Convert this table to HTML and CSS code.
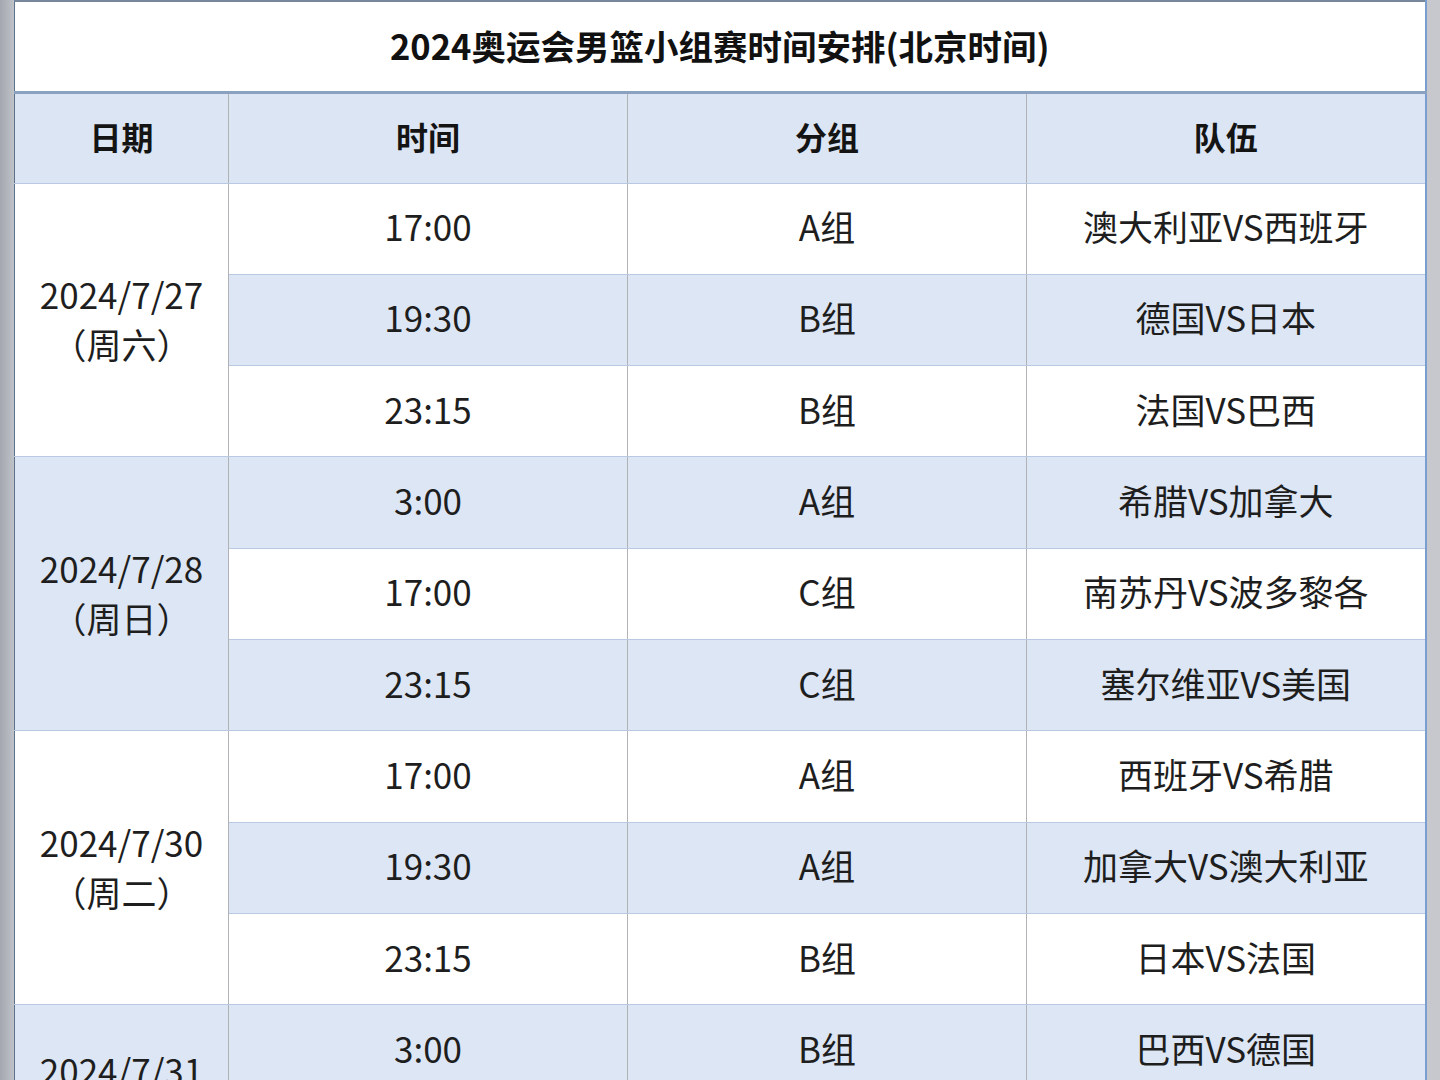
FILE: index.html
```html
<!DOCTYPE html>
<html lang="zh-CN">
<head>
<meta charset="utf-8">
<title>2024奥运会男篮小组赛时间安排(北京时间)</title>
<link rel="stylesheet" href="styles.css">
</head>
<body>
<div class="page">
<table class="schedule">
  <colgroup>
    <col class="c-date">
    <col class="c-time">
    <col class="c-group">
    <col class="c-team">
  </colgroup>
  <tr class="title-row"><td colspan="4" class="title">2024奥运会男篮小组赛时间安排(北京时间)</td></tr>
  <tr class="head-row"><th class="first">日期</th><th>时间</th><th>分组</th><th class="last">队伍</th></tr>

  <tr class="row w"><td class="date first w" rowspan="3">2024/7/27<br>（周六）</td><td>17:00</td><td>A组</td><td class="last">澳大利亚VS西班牙</td></tr>
  <tr class="row b"><td>19:30</td><td>B组</td><td class="last">德国VS日本</td></tr>
  <tr class="row w"><td>23:15</td><td>B组</td><td class="last">法国VS巴西</td></tr>

  <tr class="row b"><td class="date first b" rowspan="3">2024/7/28<br>（周日）</td><td>3:00</td><td>A组</td><td class="last">希腊VS加拿大</td></tr>
  <tr class="row w"><td>17:00</td><td>C组</td><td class="last">南苏丹VS波多黎各</td></tr>
  <tr class="row b"><td>23:15</td><td>C组</td><td class="last">塞尔维亚VS美国</td></tr>

  <tr class="row w"><td class="date first w" rowspan="3">2024/7/30<br>（周二）</td><td>17:00</td><td>A组</td><td class="last">西班牙VS希腊</td></tr>
  <tr class="row b"><td>19:30</td><td>A组</td><td class="last">加拿大VS澳大利亚</td></tr>
  <tr class="row w"><td>23:15</td><td>B组</td><td class="last">日本VS法国</td></tr>

  <tr class="row b"><td class="date first b" rowspan="2">2024/7/31<br>（周三）</td><td>3:00</td><td>B组</td><td class="last">巴西VS德国</td></tr>
  <tr class="row w"><td>23:15</td><td>C组</td><td class="last">南苏丹VS塞尔维亚</td></tr>
</table>
</div>
</body>
</html>
```
FILE: styles.css
```css
html, body {
  margin: 0;
  padding: 0;
}
body {
  background: linear-gradient(to right, #a3a7af 0, #bfc2c8 14px, #c6c8cd 100%);
  font-family: "Noto Sans CJK SC", "Noto Sans", sans-serif;
  color: #1e1e1e;
  height: 1080px;
  overflow: hidden;
}
.page {
  padding-left: 14px;
}
.schedule {
  border-collapse: collapse;
  table-layout: fixed;
  width: 1411px;
  background: #ffffff;
}
.c-date { width: 214px; }
.c-time { width: 399px; }
.c-group { width: 399px; }
.c-team { width: 399px; }

.schedule td, .schedule th {
  padding: 0;
  text-align: center;
  vertical-align: middle;
  border-top: 1px solid #b9c9e1;
  border-bottom: 1px solid #b9c9e1;
  border-left: 1px solid #b0b2b6;
  border-right: 1px solid #b0b2b6;
}
.schedule .first { border-left: 1px solid #5d7188; }
.schedule .last { border-right: 2px solid #7b9ed0; }

.title-row { height: 91px; }
.schedule .title {
  background: #ffffff;
  font-size: 34.5px;
  font-weight: 700;
  color: #111;
  border-top: 2px solid #76879b;
  border-left: 1px solid #5d7188;
  border-right: 2px solid #7b9ed0;
  border-bottom: 3px solid #8aa1bf;
  padding-bottom: 2px;
}
.head-row { height: 91px; }
.schedule th {
  background: #dce5f3;
  font-size: 32px;
  font-weight: 700;
  color: #141414;
  padding-bottom: 4px;
}
.row { height: 91.3px; }
.row td {
  font-size: 35px;
  font-weight: 400;
  line-height: 1.2;
  padding-bottom: 5px;
}
.row.w td { background: #ffffff; }
.row.b td { background: #dde6f4; }
.row td.date.w { background: #ffffff; }
.row td.date.b { background: #dde6f4; }
.row td.date {
  line-height: 50px;
  padding-bottom: 2px;
}
```
